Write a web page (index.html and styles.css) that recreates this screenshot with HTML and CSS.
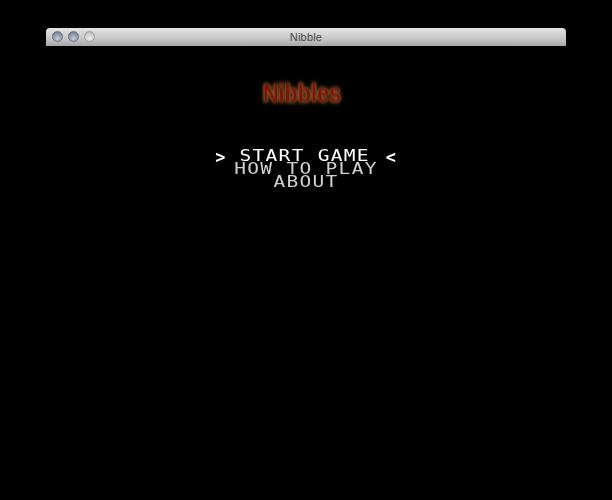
FILE: index.html
```html
<!DOCTYPE html>
<html lang="en">
<head>
  <meta charset="UTF-8">
  <title>Nibble</title>
  <link rel="stylesheet" href="styles.css">
</head>
<body>

  <div class="window">
    <div class="titlebar">
      <div class="lights">
        <span class="light"></span>
        <span class="light"></span>
        <span class="light light-off"></span>
      </div>
      <span class="window-title">Nibble</span>
    </div>

    <div class="game">
      <h1 class="logo">Nibbles</h1>
      <ul class="menu">
        <li class="menu-item selected"><span class="arrow">&gt;</span><span>START GAME</span><span class="arrow">&lt;</span></li>
        <li class="menu-item">HOW TO PLAY</li>
        <li class="menu-item">ABOUT</li>
      </ul>
    </div>
  </div>

</body>
</html>
```

FILE: styles.css
```css
html, body {
  height: 100%;
}

body {
  margin: 0;
  padding: 28px 0 0 46px;
  box-sizing: border-box;
  background: #000;
  overflow: hidden;
  font-family: 'Liberation Sans', sans-serif;
}

.window {
  width: 520px;
}

.titlebar {
  position: relative;
  display: flex;
  align-items: center;
  justify-content: center;
  height: 18px;
  border-radius: 4px 4px 0 0;
  background: linear-gradient(to bottom, #e4e4e4, #c9c9c9 55%, #a8a8a8);
}

.lights {
  position: absolute;
  left: 6px;
  top: 3px;
  display: flex;
  gap: 5px;
}

.light {
  width: 11px;
  height: 11px;
  border-radius: 50%;
  box-sizing: border-box;
  border: 1px solid #6a7480;
  background: radial-gradient(circle at 50% 72%, #c6ced6, #8d99a6 55%, #66727f);
}

.light-off {
  border-color: #a0a0a0;
  background: radial-gradient(circle at 50% 72%, #eeeeee, #cccccc 60%, #b0b0b0);
}

.window-title {
  font-size: 11px;
  color: #444;
  letter-spacing: 0.2px;
}

.game {
  display: flex;
  flex-direction: column;
  align-items: center;
}

.logo {
  margin: 33px 8px 0 0;
  font-size: 26px;
  line-height: 28px;
  font-weight: bold;
  color: #7a1508;
  -webkit-text-stroke: 0.5px #7a1508;
  transform: scaleX(0.83);
  filter: blur(0.8px);
  text-shadow: 0 0 1px #c8a058, 0 0 3px #b08c48, 0 0 6px #7a6030;
}

.menu {
  list-style: none;
  margin: 43px 0 0;
  padding: 0;
  width: 300px;
  font-family: 'DejaVu Sans Mono', monospace;
  font-size: 15px;
  line-height: 13px;
  color: #d0d0d0;
  text-align: center;
  transform: scaleX(1.3);
}

.menu-item {
  letter-spacing: 1px;
}

.selected {
  display: flex;
  justify-content: center;
  gap: 11px;
  color: #fff;
  margin-right: 2px;
}

.arrow {
  display: inline-block;
  width: 9px;
  font-size: 18px;
  font-weight: bold;
  letter-spacing: 0;
  transform: scaleX(0.72);
}
```
